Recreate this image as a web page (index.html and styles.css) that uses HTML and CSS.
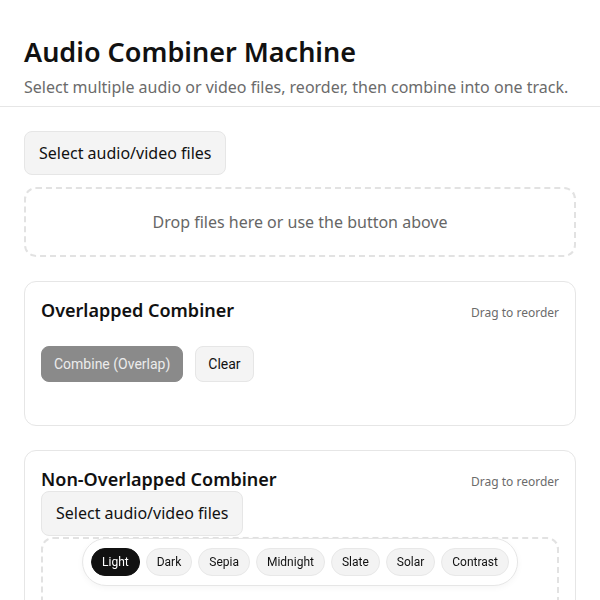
FILE: index.html
```html
<!DOCTYPE html>
<html lang="en">
<head>
<meta charset="utf-8">
<title>Audio Combiner Machine</title>
<link rel="stylesheet" href="styles.css">
</head>
<body>
<header class="header">
  <h1 class="title">Audio Combiner Machine</h1>
  <p class="subtitle">Select multiple audio or video files, reorder, then combine into one track.</p>
</header>
<main class="main">
  <button class="btn-file">Select audio/video files</button>
  <div class="dropzone">Drop files here or use the button above</div>

  <section class="card">
    <div class="card-head">
      <h2 class="card-title">Overlapped Combiner</h2>
      <span class="hint">Drag to reorder</span>
    </div>
    <div class="actions">
      <button class="btn btn-primary">Combine (Overlap)</button>
      <button class="btn btn-light">Clear</button>
    </div>
    <div class="list"></div>
  </section>

  <section class="card">
    <div class="card-head card-head-tight">
      <h2 class="card-title">Non-Overlapped Combiner</h2>
      <span class="hint">Drag to reorder</span>
    </div>
    <button class="btn-file btn-file-tall">Select audio/video files</button>
    <div class="dropzone dropzone-inner"></div>
  </section>
</main>

<nav class="themes">
  <button class="pill pill-active">Light</button>
  <button class="pill">Dark</button>
  <button class="pill">Sepia</button>
  <button class="pill">Midnight</button>
  <button class="pill">Slate</button>
  <button class="pill">Solar</button>
  <button class="pill">Contrast</button>
</nav>
</body>
</html>
```

FILE: styles.css
```css
* { box-sizing: border-box; }

html, body {
  margin: 0;
  padding: 0;
  background: #ffffff;
  color: #111111;
  font-family: "Noto Sans", "Open Sans", sans-serif;
}

.header {
  padding: 35px 24px 7px;
  border-bottom: 1px solid #e6e6e6;
}

.title {
  margin: 0 0 6px;
  font-size: 27px;
  line-height: 34px;
  font-weight: 600;
  color: #111;
}

.subtitle {
  margin: 0;
  font-size: 16px;
  line-height: 24px;
  color: #6b6b6b;
}

.main {
  padding: 24px 24px 0;
  display: flex;
  flex-direction: column;
  align-items: flex-start;
}

.btn-file {
  font-family: "Noto Sans", sans-serif;
  font-size: 16px;
  line-height: 22px;
  color: #111;
  background: #f4f4f4;
  border: 1px solid #e6e6e6;
  border-radius: 8px;
  padding: 10px 14px;
}

.btn-file-tall {
  padding: 10px 14px 11px;
}

.dropzone {
  align-self: stretch;
  margin-top: 12px;
  border: 2px dashed #e2e2e2;
  border-radius: 12px;
  padding: 22px 16px;
  text-align: center;
  font-size: 16px;
  line-height: 22px;
  color: #666;
}

.card {
  align-self: stretch;
  margin-top: 24px;
  border: 1px solid #e6e6e6;
  border-radius: 12px;
  padding: 16px;
  display: flex;
  flex-direction: column;
  align-items: flex-start;
}

.card-head {
  align-self: stretch;
  display: flex;
  justify-content: space-between;
  align-items: baseline;
  margin-bottom: 24px;
}

.card-head-tight { margin-bottom: 0; }

.card-title {
  margin: 0;
  font-size: 18px;
  line-height: 24px;
  font-weight: 600;
  color: #111;
}

.hint {
  font-size: 12px;
  color: #6b6b6b;
}

.actions {
  display: flex;
  gap: 12px;
}

.btn {
  font-family: Roboto, sans-serif;
  font-size: 14px;
  line-height: 20px;
  padding: 7px 12px;
  border-radius: 8px;
  border: 1px solid #e6e6e6;
}

.btn-primary {
  background: #8a8a8a;
  border-color: #8a8a8a;
  color: #ececec;
}

.btn-light {
  background: #f4f4f4;
  color: #111;
}

.list {
  min-height: 15px;
  margin-top: 12px;
}

.dropzone-inner {
  margin-top: 1px;
  min-height: 90px;
}

.themes {
  position: fixed;
  left: 50%;
  bottom: 14px;
  transform: translateX(-50%);
  display: flex;
  gap: 6px;
  padding: 9px 8px;
  background: #ffffff;
  border: 1px solid #e6e6e6;
  border-radius: 999px;
  box-shadow: 0 2px 6px rgba(0,0,0,0.04);
}

.pill {
  font-family: Roboto, sans-serif;
  font-size: 12px;
  line-height: 16px;
  padding: 5px 10px;
  border-radius: 999px;
  border: 1px solid #e8e8e8;
  background: #f3f3f3;
  color: #111;
}

.pill-active {
  background: #111;
  border-color: #111;
  color: #fff;
}
```
